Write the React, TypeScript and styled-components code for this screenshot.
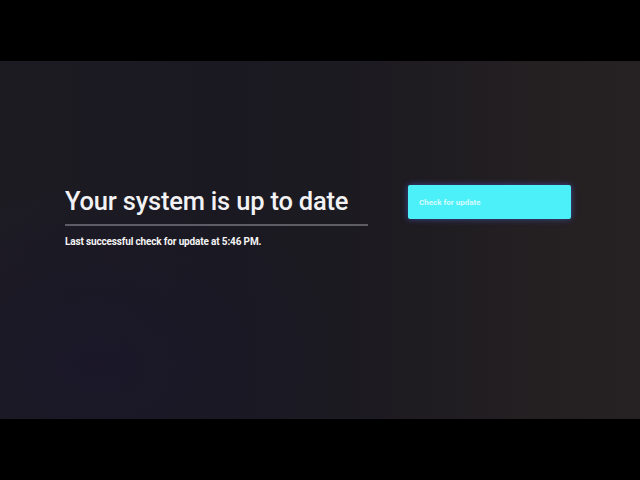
import React from "react";
import styled, { createGlobalStyle } from "styled-components";

const GlobalStyle = createGlobalStyle`
  html, body {
    margin: 0;
    padding: 0;
    background: #000;
    width: 640px;
    height: 480px;
    overflow: hidden;
  }
`;

// Black letterbox around the TV picture
const Frame = styled.div`
  width: 640px;
  height: 480px;
  padding-top: 61px;
  box-sizing: border-box;
  background: #000;
`;

const Screen = styled.div`
  height: 358px;
  background:
    radial-gradient(ellipse 40% 50% at 15% 85%, rgba(26, 22, 44, 0.7), transparent),
    linear-gradient(90deg, #1d1b22 0%, #1a1921 35%, #1d1b21 60%, #242022 85%, #262122 100%);
  display: flex;
  align-items: flex-start;
  padding: 124px 0 0 65px;
  box-sizing: border-box;
  gap: 40px;
  font-family: Roboto, "Liberation Sans", sans-serif;
`;

const Info = styled.div`
  width: 303px;
`;

const Title = styled.h1`
  margin: 0;
  color: #f2f2f4;
  font-size: 25.5px;
  font-weight: 500;
  line-height: 32px;
  letter-spacing: -0.2px;
  padding-bottom: 7px;
  border-bottom: 2px solid #5e5c64;
`;

const Status = styled.p`
  margin: 10px 0 0;
  color: #f4f4f4;
  font-size: 10px;
  font-weight: 700;
  letter-spacing: -0.15px;
`;

const UpdateButton = styled.button`
  width: 163px;
  height: 34px;
  border: none;
  border-radius: 2px;
  background: #4cf0f8;
  box-shadow: 0 0 6px rgba(90, 110, 255, 0.55);
  color: #d6fbff;
  font-family: inherit;
  font-size: 8px;
  font-weight: 700;
  text-align: left;
  padding: 0 11px;
  cursor: pointer;
`;

export default function App() {
  return (
    <>
      <GlobalStyle />
      <Frame>
        <Screen>
          <Info>
            <Title>Your system is up to date</Title>
            <Status>Last successful check for update at 5:46 PM.</Status>
          </Info>
          <UpdateButton>Check for update</UpdateButton>
        </Screen>
      </Frame>
    </>
  );
}
